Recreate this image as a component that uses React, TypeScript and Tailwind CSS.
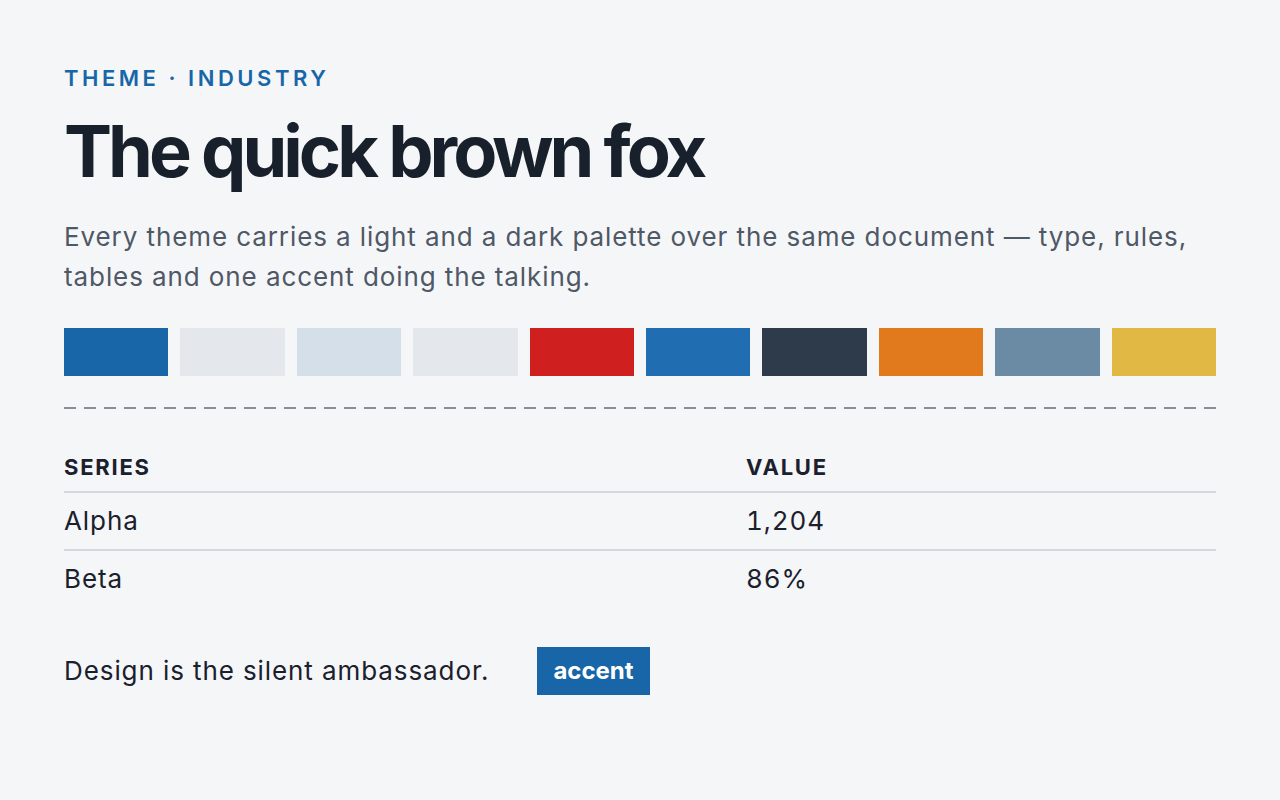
const swatches = [
  "bg-[#1866a8]",
  "bg-[#e4e7ec]",
  "bg-[#d5dfea]",
  "bg-[#e4e7ec]",
  "bg-[#d01f1f]",
  "bg-[#216db2]",
  "bg-[#2e3b4b]",
  "bg-[#e07a1c]",
  "bg-[#6b8aa3]",
  "bg-[#e1b843]",
];

const rows = [
  { series: "Alpha", value: "1,204" },
  { series: "Beta", value: "86%" },
];

const App = () => {
  return (
    <div className="min-h-screen bg-[#f5f6f8] font-['Inter',sans-serif] text-[#1a202c]">
      <div className="px-16 pt-16 pb-16">
        {/* Eyebrow */}
        <div className="text-[22px] leading-7 font-semibold tracking-[0.16em] text-[#1866a8]">
          THEME · INDUSTRY
        </div>

        {/* Title */}
        <h1 className="mt-[23px] text-7xl leading-none font-bold tracking-[-0.055em] text-[#18202b]">
          The quick brown fox
        </h1>

        <p className="mt-[30px] text-[26px] leading-10 tracking-[0.035em] text-[#4f5866]">
          Every theme carries a light and a dark palette over the same document — type, rules, tables and one
          accent doing the talking.
        </p>

        {/* Palette */}
        <div className="mt-[31px] flex gap-3">
          {swatches.map((c, i) => (
            <div key={i} className={`h-12 flex-1 ${c}`} />
          ))}
        </div>

        <div className="mt-[31px] h-0.5 bg-[repeating-linear-gradient(to_right,#8b8c95_0_12px,transparent_12px_20px)]" />

        {/* Table */}
        <div className="mt-[32px]">
          <div className="grid grid-cols-[682px_1fr] border-b-2 border-[#d3d7de] pt-3 pb-[10px] text-[22px] leading-7 font-bold tracking-[0.08em]">
            <div>SERIES</div>
            <div>VALUE</div>
          </div>
          {rows.map((r, i) => (
            <div
              key={r.series}
              className={`grid grid-cols-[682px_1fr] py-3 text-[26px] leading-8 tracking-[0.035em] ${
                i < rows.length - 1 ? "border-b-2 border-[#d3d7de]" : ""
              }`}
            >
              <div>{r.series}</div>
              <div className="tabular-nums">{r.value}</div>
            </div>
          ))}
        </div>

        {/* Footer line */}
        <div className="mt-10 flex items-center gap-12">
          <span className="text-[26px] leading-8 tracking-[0.035em]">Design is the silent ambassador.</span>
          <span className="bg-[#1866a8] px-4 py-2 text-2xl leading-8 font-bold text-white">accent</span>
        </div>
      </div>
    </div>
  );
};

export default App;
